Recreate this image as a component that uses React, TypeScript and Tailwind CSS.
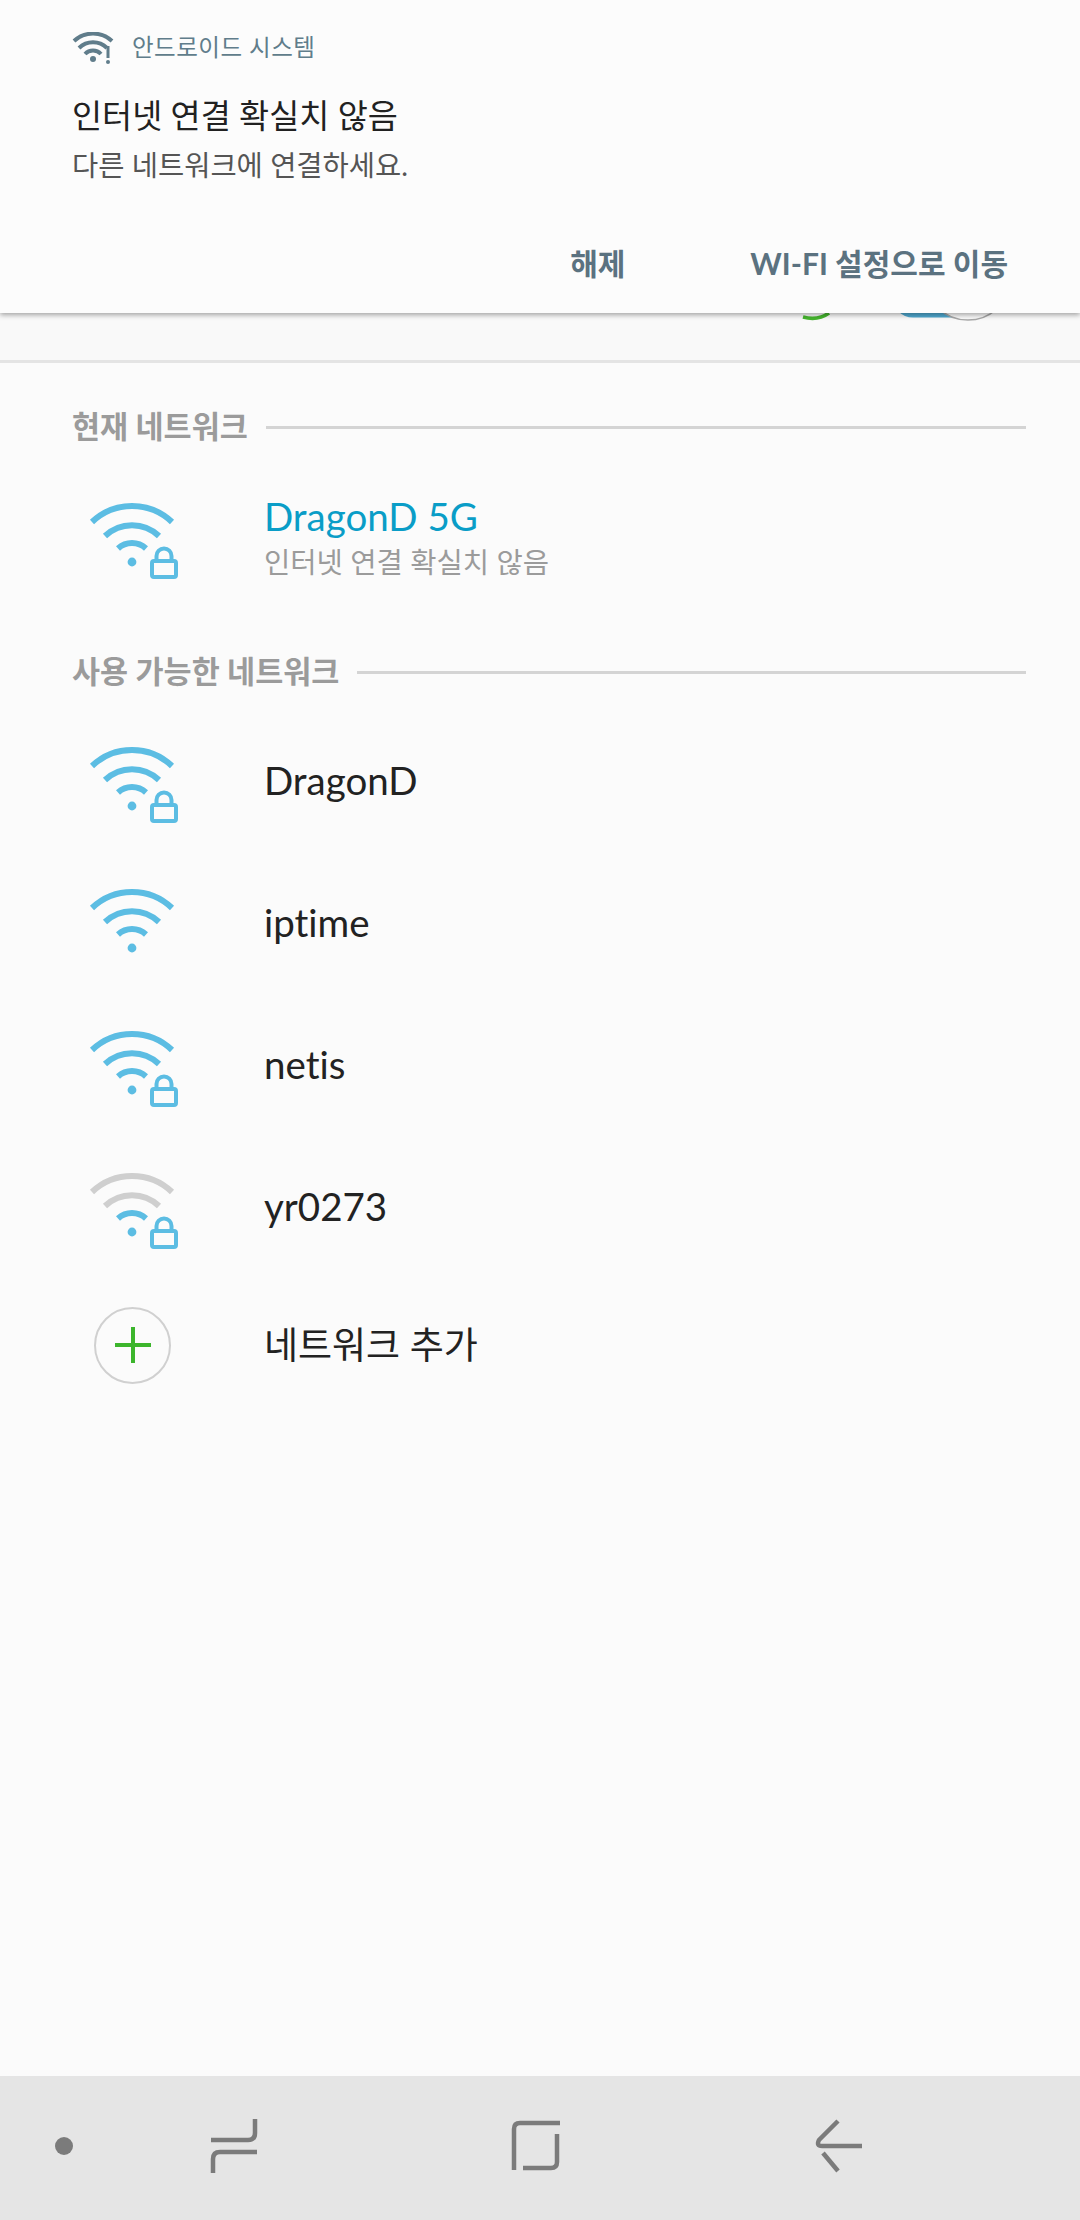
import React from 'react'

const FONT = "font-['Lato','Noto_Sans_CJK_KR',sans-serif] [font-variant-ligatures:none]"

function WifiIcon({ top = '#5cbde3', lock = false }: { top?: string; lock?: boolean }) {
  return (
    <svg width="100" height="90" viewBox="0 0 100 90" fill="none" className="shrink-0">
      <path d="M7 27A58 58 0 0 1 87 27" stroke={top} strokeWidth="6" />
      <path d="M20 41A39 39 0 0 1 74 41" stroke={top} strokeWidth="6" />
      <path d="M33 53.4A21 21 0 0 1 61 53.4" stroke="#5cbde3" strokeWidth="6" />
      <circle cx="47" cy="67" r="4.4" fill="#5cbde3" />
      {lock && (
        <g stroke="#5cbde3" strokeWidth="4">
          <rect x="67" y="66" width="24" height="16" rx="2" />
          <path d="M71.5 65v-4a7.5 7.5 0 0 1 15 0v4" />
        </g>
      )}
    </svg>
  )
}

function SectionHeader({ label }: { label: string }) {
  return (
    <div className="h-[60px] flex items-center gap-[18px] pl-[72px] pr-[54px]">
      <span className="text-[30.5px] font-bold text-[#9b9b9b] whitespace-nowrap">{label}</span>
      <div className="flex-1 h-[3px] bg-[#d4d4d4]" />
    </div>
  )
}

function NetworkRow({ name, top, lock }: { name: string; top?: string; lock?: boolean }) {
  return (
    <div className="h-[142px] flex items-center pl-[85px]">
      <WifiIcon top={top} lock={lock} />
      <span className="ml-[79px] mb-[6px] text-[38.5px] text-[#222222]">{name}</span>
    </div>
  )
}

export default function App() {
  return (
    <div className={`w-[1080px] h-[2220px] flex flex-col bg-[#fbfbfb] overflow-hidden ${FONT}`}>
      {/* Notification */}
      <div className="relative z-10 h-[313px] shrink-0 bg-[#fcfcfc] shadow-[0_2px_5px_rgba(0,0,0,0.35)] pl-[72px]">
        <div className="flex items-center h-[32px] mt-[32px]">
          <svg width="42" height="32" viewBox="0 0 42 32" fill="none" className="shrink-0">
            <path d="M2 9A28 28 0 0 1 40 9" stroke="#607d8b" strokeWidth="4" />
            <path d="M7 16A20 20 0 0 1 35 16" stroke="#607d8b" strokeWidth="4" />
            <path d="M13 22A11 11 0 0 1 29 22" stroke="#607d8b" strokeWidth="4" />
            <circle cx="21" cy="27" r="3" fill="#607d8b" />
            <path d="M36 14v12" stroke="#607d8b" strokeWidth="3" />
            <circle cx="36" cy="30" r="2" fill="#607d8b" />
          </svg>
          <span className="ml-[18px] text-[23.5px] text-[#607d8b] tracking-[0.5px]">안드로이드 시스템</span>
        </div>
        <div className="mt-[30px] text-[32.7px] leading-[44px] text-[#212121]">인터넷 연결 확실치 않음</div>
        <div className="mt-[7px] text-[28.5px] leading-[40px] text-[#555555]">다른 네트워크에 연결하세요.</div>
        <div className="absolute right-[72px] top-[243px] flex items-center h-[40px] font-bold text-[30px] text-[#5b7280]">
          <span className="mr-[125px]">해제</span>
          <span>WI-FI 설정으로 이동</span>
        </div>
      </div>

      {/* Wi-Fi switch row, almost fully hidden by the notification */}
      <div className="h-[50px] shrink-0 flex justify-end pr-[84px] border-b-[3px] border-[#e4e4e4] bg-[#f9f9f9]">
        <div className="-mt-[40px] flex items-start">
          <svg width="194" height="48" viewBox="0 0 194 48" fill="none">
            <path d="M1 44C10 46.5 20 45 27 40" stroke="#45b52e" strokeWidth="3.5" />
            <rect x="90" y="2.5" width="80" height="42" rx="21" fill="#4fa9d0" />
            <circle cx="166" cy="4" r="43" fill="#fafafa" stroke="#a8a8a8" strokeWidth="1.5" />
          </svg>
        </div>
      </div>

      {/* Network list */}
      <div className="flex-1 pt-[34px]">
        <SectionHeader label="현재 네트워크" />
        <div className="h-[142px] mt-[12px] flex items-center pl-[85px]">
          <WifiIcon lock />
          <div className="ml-[79px] mb-[6px] flex flex-col">
            <span className="text-[38.5px] leading-[48px] text-[#0a9dc7]">DragonD 5G</span>
            <span className="text-[28.6px] leading-[40px] text-[#9b9b9b] mt-[2px]">인터넷 연결 확실치 않음</span>
          </div>
        </div>
        <div className="mt-[31px]">
          <SectionHeader label="사용 가능한 네트워크" />
        </div>
        <div className="mt-[11px]">
          <NetworkRow name="DragonD" lock />
          <NetworkRow name="iptime" />
          <NetworkRow name="netis" lock />
          <NetworkRow name="yr0273" top="#cfcfcf" lock />
        </div>
        <div className="h-[128px] flex items-center pl-[94px]">
          <div className="w-[77px] h-[77px] rounded-full border-2 border-[#d0d0d0] flex items-center justify-center">
            <svg width="36" height="36" viewBox="0 0 36 36">
              <path d="M18 0v36M0 18h36" stroke="#3cb52c" strokeWidth="4" />
            </svg>
          </div>
          <span className="ml-[93px] text-[37px] text-[#222222]">네트워크 추가</span>
        </div>
      </div>

      {/* Navigation bar */}
      <div className="h-[144px] shrink-0 bg-[#e5e5e5]">
        <svg width="1080" height="144" viewBox="0 0 1080 144" fill="none" stroke="#7b7b7b" strokeWidth="4.5">
          <circle cx="64" cy="70" r="9" fill="#7b7b7b" stroke="none" />
          <path d="M255 43v14q0 7-7 7h-37" />
          <path d="M257 76h-37q-7 0-7 7v14" />
          <path d="M560 47h-40q-6 0-6 6v41" />
          <path d="M557 58v28q0 6-6 6h-28" />
          <path d="M838 45L819 64q-3 6 3 6h40" />
          <path d="M823 77l15 18" />
        </svg>
      </div>
    </div>
  )
}
